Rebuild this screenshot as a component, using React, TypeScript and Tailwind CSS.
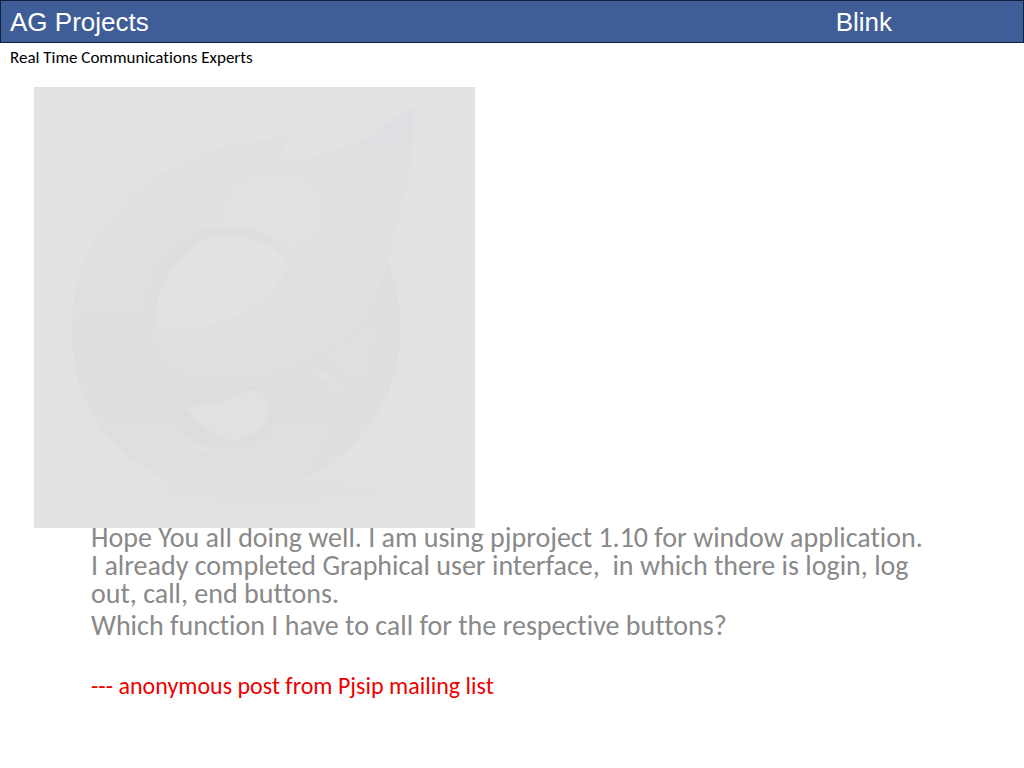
const BlinkLogo = () => (
  <svg className="block h-full w-full" viewBox="0 0 441 441" role="img" aria-label="Blink logo">
    <defs>
      <linearGradient id="body" x1="0" y1="0" x2="0" y2="1">
        <stop offset="0" stopColor="#dee0e2" />
        <stop offset="0.3" stopColor="#dee0e2" />
        <stop offset="0.6" stopColor="#dddee0" />
        <stop offset="1" stopColor="#dedfe1" />
      </linearGradient>
      <linearGradient id="leaf" x1="0" y1="0" x2="0" y2="1">
        <stop offset="0" stopColor="#dddfe2" />
        <stop offset="0.3" stopColor="#dee0e1" />
        <stop offset="0.6" stopColor="#dee0e2" />
        <stop offset="0.8" stopColor="#dfe0e0" />
        <stop offset="1" stopColor="#dddfe1" />
      </linearGradient>
      <radialGradient id="shine">
        <stop offset="0.4" stopColor="#e1e1e1" />
        <stop offset="1" stopColor="#e1e1e1" stopOpacity="0" />
      </radialGradient>
      <radialGradient id="shadow">
        <stop offset="0.3" stopColor="#dfdfdf" />
        <stop offset="1" stopColor="#e2e2e2" />
      </radialGradient>
    </defs>
    <rect width="441" height="441" fill="#e2e2e2" />
    <ellipse cx="236" cy="404" rx="154" ry="15" fill="url(#shadow)" />

    {/* ring */}
    <path
      d="M38 243C38 196 50 161 76 133C96 105 118 89 143 80C174 61 214 53 258 50C252 57 248 65 246 75C276 73 304 64 329 53C345 45 360 30 379 20C380 42 378 60 376 76C373 104 360 145 353 175C362 194 366 214 366 243C366 286 353 319 323 353C308 370 292 382 273 391C250 404 224 410 196 410C169 409 145 402 123 388C98 376 79 358 63 336C47 311 38 279 38 243Z"
      fill="url(#body)"
    />
    <path
      d="M353 175C364 196 366 219 366 243C366 286 353 319 323 353C308 370 292 382 273 391C300 348 312 320 317 296L286 273C320 249 345 214 353 175Z"
      fill="#dedede"
    />

    {/* leaf */}
    <path
      d="M246 75C276 73 304 64 329 53C345 45 360 30 379 20C380 42 378 60 376 76C373 104 360 145 353 175C346 214 324 248 286 265C246 287 203 291 163 288C141 284 124 266 117 245C161 243 198 231 226 211C264 191 290 151 286 111C282 91 266 80 246 75Z"
      fill="url(#leaf)"
    />
    <ellipse cx="240" cy="126" rx="84" ry="66" fill="url(#shine)" />

    {/* upper opening */}
    <path
      d="M112 240C110 208 117 181 132 164C149 146 170 139 196 139C223 140 248 150 255 177C246 198 224 218 205 226C176 242 146 244 112 240Z"
      fill="#dedede"
    />
    <path
      d="M121 242C121 205 137 178 158 162C171 150 184 150 201 150C222 150 247 160 254 178C246 199 228 213 207 226C182 239 155 243 121 242Z"
      fill="#e2e2e2"
    />

    {/* lower openings */}
    <path
      d="M137 302C170 308 204 304 226 296C244 306 243 335 231 349C211 366 168 364 148 346C141 336 135 319 137 302Z"
      fill="#dddddd"
    />
    <path
      d="M151 320C176 318 197 313 216 303C228 304 234 311 234 321C234 338 222 350 198 353C180 349 164 337 151 320Z"
      fill="#e1e1e1"
    />
    <path d="M146 346C158 357 170 363 186 367C170 368 155 360 146 346Z" fill="#e2e2e2" />
    <path d="M186 367C203 367 219 360 229 349" fill="none" stroke="#dfdfe1" strokeWidth="4" />
    <path d="M286 273C303 262 323 249 339 230C341 258 334 285 325 296C314 284 302 277 286 273Z" fill="#dfdfdf" />
    <path d="M281 285C292 285 303 292 308 302C297 300 287 294 281 285Z" fill="#e1e1e1" />
  </svg>
);

const App = () => {
  return (
    <div className="min-h-screen bg-white font-['Carlito','Lato',sans-serif] text-black [font-variant-ligatures:none]">
      <header>
        <div className="flex h-[43px] items-center justify-between border border-[#10203f] bg-[#3f5d96] pl-[9px] pr-[131px] font-['Liberation_Sans',Arial,sans-serif] text-[26px] leading-[30px] text-white">
          <p>AG Projects</p>
          <p>Blink</p>
        </div>
        <p className="px-[10px] pt-1 text-[17px] leading-[22px]">Real Time Communications Experts</p>
      </header>

      <main className="pt-[18px]">
        {/* the picture covers the top edge of the quote */}
        <div className="relative z-10 ml-[34px] aspect-square w-[441px] max-w-full">
          <BlinkLogo />
        </div>

        <blockquote className="-mt-1 pl-[91px] pr-16 text-[28px] leading-7 text-[#898989]">
          <p>
            Hope You all doing well. I am using pjproject 1.10 for window application.
            <br />
            I already completed Graphical user interface,&nbsp; in which there is login, log
            <br />
            out, call, end buttons.
          </p>
          <p className="mt-1">Which function I have to call for the respective buttons?</p>
          <footer className="mt-8 text-[24px] text-[#ee0000]">--- anonymous post from Pjsip mailing list</footer>
        </blockquote>
      </main>
    </div>
  );
};

export default App;
